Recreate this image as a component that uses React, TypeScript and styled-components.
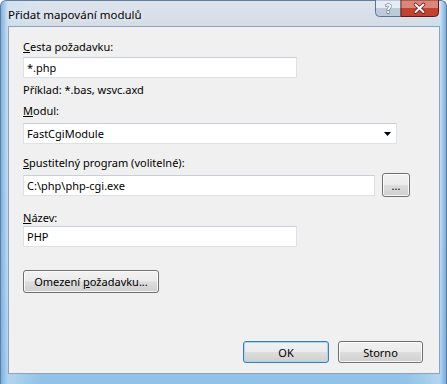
import React from "react";
import styled, { createGlobalStyle } from "styled-components";

const Global = createGlobalStyle`
  html, body { margin: 0; padding: 0; }
  body {
    width: 447px;
    height: 384px;
    overflow: hidden;
    font-family: "Noto Sans", "Open Sans", sans-serif;
    font-size: 11px;
    color: #000;
  }
`;

const Window = styled.div`
  width: 447px;
  height: 384px;
  box-sizing: border-box;
  display: flex;
  flex-direction: column;
  padding: 0 6px 10px 7px;
  border-radius: 6px 6px 0 0;
  background:
    linear-gradient(90deg, rgba(120, 175, 225, 0.9) 0px, rgba(200, 225, 245, 0.6) 7px, rgba(200, 220, 238, 0) 40px),
    linear-gradient(270deg, rgba(110, 170, 225, 0.9) 0px, rgba(200, 225, 245, 0.6) 6px, rgba(200, 220, 238, 0) 40px),
    linear-gradient(180deg, #dde4ec 0px, #d3dce6 26px, #bcd4ec 60%, #8fc3e8 100%);
  border: 1px solid #5f7f9f;
  border-bottom: none;
`;

const TitleBar = styled.div`
  height: 25px;
  display: flex;
  align-items: flex-start;
  justify-content: space-between;
`;

const Title = styled.div`
  padding-top: 6px;
  font-size: 11.5px;
  line-height: 16px;
  color: #000;
  text-shadow: 0 0 6px rgba(255, 255, 255, 0.9);
`;

const Caption = styled.svg`
  display: block;
  flex: none;
  width: 64px;
  height: 17px;
  margin-right: 1px;
  margin-top: -1px;
`;

const Client = styled.div`
  flex: 1;
  display: flex;
  flex-direction: column;
  background: #f0f0f0;
  border: 1px solid #8ea3ba;
  padding: 0 16px 10px 14px;
`;

const Label = styled.div<{ $top: number }>`
  margin-top: ${(p) => p.$top}px;
  height: 16px;
  line-height: 16px;
  white-space: nowrap;
`;

const Key = styled.span`
  text-decoration: underline;
  text-underline-offset: 1px;
`;

const TextBox = styled.div<{ $width: number; $top?: number }>`
  margin-top: ${(p) => p.$top ?? 0}px;
  width: ${(p) => p.$width}px;
  height: 21px;
  box-sizing: border-box;
  background: #fff;
  border: 1px solid #dde2e8;
  border-top-color: #c9cfd8;
  display: flex;
  align-items: center;
  padding: 0 3px;
  white-space: nowrap;
`;

const Combo = styled(TextBox)`
  justify-content: space-between;
  padding-right: 5px;
`;

const Arrow = styled.svg`
  width: 7px;
  height: 4px;
`;

const Row = styled.div<{ $top: number }>`
  margin-top: ${(p) => p.$top}px;
  display: flex;
  align-items: center;
  gap: 7px;
`;

const Button = styled.div<{ $width: number; $height?: number; $default?: boolean }>`
  width: ${(p) => p.$width}px;
  height: ${(p) => p.$height ?? 22}px;
  box-sizing: border-box;
  border: 1px solid ${(p) => (p.$default ? "#3c7fb1" : "#707070")};
  border-radius: 3px;
  background: linear-gradient(180deg, #f2f2f2 0%, #ebebeb 48%, #dddddd 52%, #cfcfcf 100%);
  box-shadow: inset 0 0 0 1px ${(p) => (p.$default ? "#9fd8f2" : "rgba(255, 255, 255, 0.8)")};
  display: flex;
  align-items: center;
  justify-content: center;
  white-space: nowrap;
`;

const Footer = styled.div`
  margin-top: auto;
  display: flex;
  justify-content: flex-end;
  gap: 9px;
`;

function CaptionButtons() {
  return (
    <Caption viewBox="0 0 64 17">
      <path d="M0.5 0 V12.5 Q0.5 16.5 4.5 16.5 H26 V0 Z" fill="#bccada" stroke="#5d7290" />
      <path d="M1 0.5 H25.5 V8 H1 Z" fill="#e6ecf3" />
      <path d="M26 0 V16.5 H59.5 Q63.5 16.5 63.5 12.5 V0 Z" fill="#c4422e" stroke="#5a1c16" />
      <path d="M26.5 0.5 H63 V8 H26.5 Z" fill="#d9877a" />
      <text
        x="13.5"
        y="12.5"
        textAnchor="middle"
        fontFamily="DejaVu Sans, sans-serif"
        fontWeight="bold"
        fontSize="12"
        fill="#f4f7fb"
        stroke="#3a4a60"
        strokeWidth="0.8"
        paintOrder="stroke"
      >
        ?
      </text>
      <path d="M40.5 4.5 L48.5 12 M48.5 4.5 L40.5 12" stroke="#5a1c16" strokeWidth="3.6" strokeLinecap="round" />
      <path d="M40.5 4.5 L48.5 12 M48.5 4.5 L40.5 12" stroke="#fff" strokeWidth="2" strokeLinecap="round" />
    </Caption>
  );
}

export default function App() {
  return (
    <>
      <Global />
      <Window>
        <TitleBar>
          <Title>Přidat mapování modulů</Title>
          <CaptionButtons />
        </TitleBar>
        <Client>
          <Label $top={12}>
            <Key>C</Key>esta požadavku:
          </Label>
          <TextBox $width={274} $top={2}>*.php</TextBox>
          <Label $top={4}>Příklad: *.bas, wsvc.axd</Label>
          <Label $top={5}>
            <Key>M</Key>odul:
          </Label>
          <Combo $width={374} $top={4}>
            <span>FastCgiModule</span>
            <Arrow viewBox="0 0 7 4">
              <path d="M0 0 H7 L3.5 4 Z" fill="#000" />
            </Arrow>
          </Combo>
          <Label $top={11}>
            <Key>S</Key>pustitelný program (volitelné):
          </Label>
          <Row $top={2}>
            <TextBox $width={352}>C:\php\php-cgi.exe</TextBox>
            <Button $width={28} $height={24}>...</Button>
          </Row>
          <Label $top={13}>
            <Key>N</Key>ázev:
          </Label>
          <TextBox $width={274}>PHP</TextBox>
          <Row $top={23}>
            <Button $width={136} $height={23}>
              Omezení&nbsp;<Key>p</Key>ožadavku...
            </Button>
          </Row>
          <Footer>
            <Button $width={86} $default>OK</Button>
            <Button $width={85}>Storno</Button>
          </Footer>
        </Client>
      </Window>
    </>
  );
}
